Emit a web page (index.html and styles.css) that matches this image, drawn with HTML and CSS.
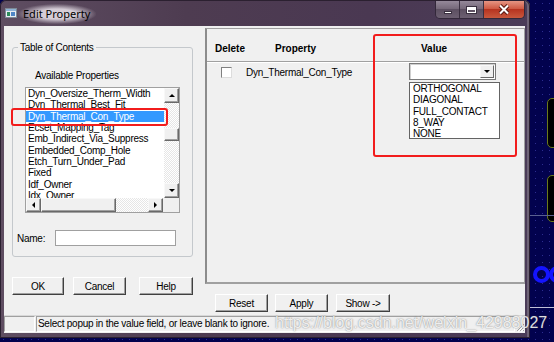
FILE: index.html
```html
<!DOCTYPE html>
<html lang="en">
<head>
    <meta charset="UTF-8">
    <title>Edit Property</title>
    <link rel="stylesheet" href="styles.css">
</head>
<body>
<div class="desk">
    <div class="window">
        <div class="titlebar">
            <svg class="app-icon" width="12" height="10" viewBox="0 0 12 10">
                <rect x="0.5" y="0.5" width="11" height="9" fill="#e9eef3" stroke="#7d8a96"/>
                <rect x="1" y="1" width="10" height="2" fill="#8fb3d6"/>
                <rect x="2" y="4" width="3" height="4" fill="#2c8c5a"/>
                <rect x="6" y="4" width="4" height="4" fill="#4f86c6"/>
            </svg>
            <span class="title">Edit Property</span>
            <div class="caption">
                <span class="cap cap-min"><i></i></span>
                <span class="cap cap-max"><i></i></span>
                <span class="cap cap-close">
                    <svg width="14" height="11" viewBox="0 0 14 11">
                        <path d="M3 1.5 L11 9.5 M11 1.5 L3 9.5" stroke="#5a1a12" stroke-width="4"/>
                        <path d="M3 1.5 L11 9.5 M11 1.5 L3 9.5" stroke="#fff" stroke-width="2"/>
                    </svg>
                </span>
            </div>
        </div>

        <div class="client">
            <div class="main">
                <div class="left">
                    <div class="group">
                        <span class="legend">Table of Contents</span>
                        <div class="avail">Available Properties</div>
                        <div class="listbox">
                            <div class="lb-top">
                                <ul class="items">
                                    <li>Dyn_Oversize_Therm_Width</li>
                                    <li>Dyn_Thermal_Best_Fit</li>
                                    <li class="sel">Dyn_Thermal_Con_Type</li>
                                    <li>Ecset_Mapping_Tag</li>
                                    <li>Emb_Indirect_Via_Suppress</li>
                                    <li>Embedded_Comp_Hole</li>
                                    <li>Etch_Turn_Under_Pad</li>
                                    <li>Fixed</li>
                                    <li>Idf_Owner</li>
                                    <li>Idx_Owner</li>
                                </ul>
                                <div class="vscroll">
                                    <span class="sbtn"><i class="arr up"></i></span>
                                    <span class="track t1"></span>
                                    <span class="sbtn thumb-v"></span>
                                    <span class="track t2"></span>
                                    <span class="sbtn"><i class="arr down"></i></span>
                                </div>
                            </div>
                            <div class="hscroll">
                                <span class="sbtn"><i class="arr lft"></i></span>
                                <span class="sbtn thumb-h"></span>
                                <span class="track t3"></span>
                                <span class="sbtn"><i class="arr rgt"></i></span>
                                <span class="corner"></span>
                            </div>
                        </div>
                        <div class="name-row">
                            <label for="propName">Name:</label>
                            <input type="text" id="propName">
                        </div>
                    </div>
                    <div class="btn-row">
                        <button class="btn w52 gap9">OK</button>
                        <button class="btn w53 gap13">Cancel</button>
                        <button class="btn w54">Help</button>
                    </div>
                </div>

                <div class="right">
                    <div class="grid">
                        <div class="grid-head">
                            <span class="h-del">Delete</span>
                            <span class="h-prop">Property</span>
                            <span class="h-val">Value</span>
                        </div>
                        <div class="grid-row">
                            <span class="check"></span>
                            <span class="prop-name">Dyn_Thermal_Con_Type</span>
                            <div class="combo">
                                <span class="combo-btn"><i class="arr down"></i></span>
                                <ul class="drop">
                                    <li>ORTHOGONAL</li>
                                    <li>DIAGONAL</li>
                                    <li>FULL_CONTACT</li>
                                    <li>8_WAY</li>
                                    <li>NONE</li>
                                </ul>
                            </div>
                        </div>
                    </div>
                    <div class="btn-row bottom-btns">
                        <button class="btn w53 gap7">Reset</button>
                        <button class="btn w53 gap8">Apply</button>
                        <button class="btn w54">Show -&gt;</button>
                    </div>
                </div>
            </div>

            <div class="status">
                <span class="pane pane1"></span>
                <span class="pane pane2">Select popup in the value field, or leave blank to ignore.</span>
                <svg class="grip" width="10" height="10" viewBox="0 0 10 10">
                    <path d="M9 2 L2 9 M9 5 L5 9 M9 8 L8 9" stroke="#a0a0a0" stroke-width="1"/>
                    <path d="M10 3 L3 10 M10 6 L6 10" stroke="#fff" stroke-width="1"/>
                </svg>
            </div>
        </div>
    </div>

    <!-- desktop behind the dialog -->
    <div class="pad pad1"></div>
    <div class="pad pad2"></div>
    <div class="hline hline1"></div>
    <div class="ring ring1"></div>
    <div class="ring ring2"></div>
    <div class="hline hline2"></div>

    <!-- annotations -->
    <div class="mark mark1"></div>
    <div class="mark mark2"></div>
    <div class="watermark">https://blog.csdn.net/weixin_42988027</div>
</div>
</body>
</html>
```

FILE: styles.css
```css
* {
    box-sizing: border-box;
}

body {
    margin: 0;
    font-family: 'Liberation Sans', Arial, sans-serif;
    font-size: 10px;
    letter-spacing: -0.25px;
    color: #000;
    background: #020250;
}

ul {
    list-style: none;
    margin: 0;
    padding: 0;
}

.desk {
    position: relative;
    width: 554px;
    height: 342px;
    overflow: hidden;
    background-color: #02024e;
    background-image: radial-gradient(circle, #2d2d90 0.8px, transparent 1px);
    background-size: 7px 7px;
}

/* window frame */
.window {
    width: 530px;
    height: 338px;
    padding: 0 5px 5px 4px;
    display: flex;
    flex-direction: column;
    border-radius: 6px 6px 0 0;
    background: linear-gradient(90deg, #5f4e62 0%, #4e3c51 35%, #4a3852 70%, #4b3c58 100%);
    box-shadow: inset 0 0 0 1px #2b2030, inset -3px 0 0 #6f6477;
}

.titlebar {
    height: 26px;
    display: flex;
    align-items: flex-start;
}

.app-icon {
    margin: 8px 0 0 1px;
}

.title {
    margin: 4px 0 0 1px;
    padding: 3px 6px 3px 5px;
    font-family: 'Noto Sans', sans-serif;
    font-size: 11px;
    letter-spacing: 0;
    line-height: 14px;
    color: #000;
    background: radial-gradient(ellipse at center, rgba(235, 228, 236, 0.85) 35%, rgba(235, 228, 236, 0) 72%);
}

.caption {
    margin: 1px 0 0 auto;
    display: flex;
    border: 1px solid #33283a;
    border-top: 0;
    border-radius: 0 0 5px 5px;
    overflow: hidden;
}

.cap {
    height: 17px;
    display: flex;
    align-items: center;
    justify-content: center;
    background: linear-gradient(#95899a, #76697a 45%, #5d5062 50%, #6c5f71);
    border-left: 1px solid #3a2f40;
}

.cap-min {
    width: 23px;
    border-left: 0;
}

.cap-min i {
    width: 8px;
    height: 3px;
    margin-top: 5px;
    background: #fff;
    border: 1px solid #3a3040;
}

.cap-max {
    width: 24px;
}

.cap-max i {
    width: 11px;
    height: 8px;
    border: 1px solid #3a3040;
    box-shadow: inset 0 0 0 1px #fff, inset 0 2px 0 1px #fff;
}

.cap-close {
    width: 41px;
    background: linear-gradient(#e69583, #cf5a44 45%, #b73420 50%, #c9583d);
}

/* client area */
.client {
    flex: 1;
    display: flex;
    flex-direction: column;
    background: #f0f0f0;
}

.main {
    height: 289px;
    display: flex;
}

.left {
    width: 201px;
    padding: 21px 0 0 8px;
}

.group {
    width: 181px;
    height: 210px;
    border: 1px solid #c4c8cc;
    border-radius: 3px;
}

.legend {
    display: table;
    margin: -7px 0 0 5px;
    padding: 0 2px;
    line-height: 13px;
    background: #f0f0f0;
}

.avail {
    margin: 15px 0 0 22px;
    line-height: 13px;
}

.listbox {
    margin: 5px 0 0 12px;
    width: 155px;
    height: 126px;
    border: 1px solid #a0a0a0;
    background: #fff;
}

.lb-top {
    display: flex;
    height: 110px;
}

.items {
    width: 138px;
    overflow: hidden;
}

.items li {
    height: 11.33px;
    line-height: 11.33px;
    padding-left: 2px;
    white-space: nowrap;
}

.items li.sel {
    background: #3399ff;
    color: #fff;
}

.vscroll {
    width: 15px;
    display: flex;
    flex-direction: column;
}

.sbtn {
    display: flex;
    align-items: center;
    justify-content: center;
    width: 15px;
    height: 15px;
    background: #f0f0f0;
    border: 1px solid;
    border-color: #f8f8f8 #696969 #696969 #f8f8f8;
    box-shadow: inset -1px -1px 0 #a0a0a0;
}

.track {
    display: block;
    background-color: #fafafa;
    background-image: repeating-conic-gradient(#ffffff 0 25%, #e6e6e6 0 50%);
    background-size: 2px 2px;
}

.t1 {
    height: 25px;
}

.thumb-v {
    height: 13px;
}

.t2 {
    flex: 1;
}

.hscroll {
    display: flex;
    height: 14px;
}

.hscroll .sbtn {
    height: 14px;
}

.thumb-h {
    width: 75px !important;
}

.t3 {
    flex: 1;
}

.corner {
    width: 16px;
    background: #f0f0f0;
}

.arr {
    width: 0;
    height: 0;
    border: 3px solid transparent;
}

.arr.up {
    border-bottom-color: #000;
    border-top-width: 0;
}

.arr.down {
    border-top-color: #000;
    border-bottom-width: 0;
}

.arr.lft {
    border-right-color: #000;
    border-left-width: 0;
}

.arr.rgt {
    border-left-color: #000;
    border-right-width: 0;
}

.name-row {
    display: flex;
    align-items: center;
    margin: 17px 0 0 4px;
}

.name-row label {
    width: 38px;
}

.name-row input {
    width: 121px;
    height: 16px;
    margin: 0;
    padding: 0;
    border: 1px solid #a0a0a0;
    background: #fff;
}

/* buttons */
.btn-row {
    display: flex;
    margin-top: 20px;
}

.btn {
    height: 18px;
    padding: 0;
    font: inherit;
    letter-spacing: inherit;
    color: #000;
    background: #f0f0f0;
    border: 1px solid;
    border-color: #fff #404040 #404040 #fff;
    box-shadow: inset -1px -1px 0 #a0a0a0;
}

.w52 { width: 52px; }
.w53 { width: 53px; }
.w54 { width: 54px; }
.gap7 { margin-right: 7px; }
.gap8 { margin-right: 8px; }
.gap9 { margin-right: 9px; }
.gap13 { margin-right: 13px; }

/* property grid */
.right {
    flex: 1;
    display: flex;
    flex-direction: column;
}

.grid {
    margin-top: 2px;
    height: 256px;
    border-left: 2px solid #8c8c8c;
    border-top: 1px solid #a0a0a0;
    border-bottom: 2px solid #a0a0a0;
    border-right: 1px solid #a0a0a0;
}

.grid-head {
    display: flex;
    height: 33px;
    padding: 13px 0 0 8px;
    line-height: 13px;
    font-weight: bold;
    letter-spacing: 0;
    border-bottom: 1px solid #a0a0a0;
    box-shadow: 0 1px 0 #fff;
}

.h-del {
    width: 60px;
}

.h-prop {
    width: 146px;
}

.grid-row {
    display: flex;
    align-items: flex-start;
    padding-left: 14px;
}

.check {
    width: 11px;
    height: 11px;
    margin-top: 5px;
    background: #fff;
    border: 1px solid;
    border-color: #808080 #dcdcdc #dcdcdc #808080;
}

.prop-name {
    width: 163px;
    margin: 4px 0 0 14px;
    line-height: 13px;
}

.combo {
    position: relative;
    width: 87px;
    height: 17px;
    margin-top: 1px;
    display: flex;
    justify-content: flex-end;
    background: #fff;
    border: 1px solid #7a7a7a;
    box-shadow: inset 1px 1px 0 #d0d0d0;
}

.combo-btn {
    display: flex;
    align-items: center;
    justify-content: center;
    width: 14px;
    margin: 1px 1px 1px 0;
    background: #f0f0f0;
    border: 1px solid;
    border-color: #f8f8f8 #696969 #696969 #f8f8f8;
}

.drop {
    position: absolute;
    top: 18px;
    left: -1px;
    width: 91px;
    height: 57px;
    background: #fff;
    border: 1px solid #646464;
    padding-left: 3px;
}

.drop li {
    height: 11.33px;
    line-height: 11.33px;
}

.bottom-btns {
    margin-top: 10px;
    padding-left: 10px;
}

/* status bar */
.status {
    height: 18px;
    display: flex;
    align-items: flex-end;
    padding-bottom: 1px;
    border-top: 1px solid #d8d8d8;
}

.pane {
    height: 16px;
    line-height: 14px;
    border: 1px solid;
    border-color: #a0a0a0 #fff #fff #a0a0a0;
    white-space: nowrap;
}

.pane1 {
    width: 31px;
}

.pane2 {
    width: 480px;
    margin-left: 1px;
    padding-left: 1px;
}

.grip {
    margin-left: auto;
}

/* desktop behind */
.pad {
    position: absolute;
    left: 547px;
    width: 20px;
    background: #000;
    border: 1px solid #6b7a1c;
    border-radius: 5px;
}

.pad1 {
    top: 98px;
    height: 50px;
}

.pad2 {
    top: 175px;
    height: 47px;
}

.hline {
    position: absolute;
    left: 530px;
    width: 24px;
    height: 1px;
}

.hline1 {
    top: 215px;
    background: #5a6090;
}

.hline2 {
    top: 307px;
    background: #c0c0d8;
}

.ring {
    position: absolute;
    top: 266px;
    width: 17px;
    height: 17px;
    border: 4px solid #1414ff;
    border-radius: 50%;
}

.ring1 {
    left: 533px;
}

.ring2 {
    left: 549px;
}

/* annotations */
.mark {
    position: absolute;
    border: 2px solid #f21c1c;
    border-radius: 3px;
}

.mark1 {
    left: 11px;
    top: 108px;
    width: 157px;
    height: 18px;
}

.mark2 {
    left: 373px;
    top: 34px;
    width: 144px;
    height: 123px;
}

.watermark {
    position: absolute;
    left: 275px;
    top: 314px;
    font-size: 16px;
    letter-spacing: 0;
    line-height: 18px;
    color: rgba(255, 255, 255, 0.85);
    text-shadow: 0 0 1.5px rgba(70, 70, 70, 0.75);
    white-space: nowrap;
}
```
